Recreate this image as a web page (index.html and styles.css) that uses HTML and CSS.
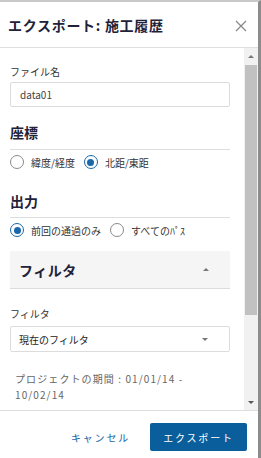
FILE: index.html
```html
<!DOCTYPE html>
<html lang="ja">
<head>
<meta charset="UTF-8" />
<meta name="viewport" content="width=device-width, initial-scale=1" />
<title>エクスポート: 施工履歴</title>
<link rel="stylesheet" href="styles.css">
</head>
<body>
<div class="panel">
  <div class="header">
    <h1 class="title">エクスポート: 施工履歴</h1>
    <svg class="close" width="12" height="12" viewBox="0 0 12 12"><path d="M1 1L11 11M11 1L1 11" stroke="#8a8a8a" stroke-width="1.3" fill="none"/></svg>
  </div>

  <div class="body">
    <div class="content">
      <label class="field-label" for="naam">ファイル名</label>
      <div class="input">data01</div>

      <h2 class="section-title first">座標</h2>
      <div class="radio-row">
        <label class="radio"><span class="dot"></span>緯度/経度</label>
        <label class="radio"><span class="dot checked"></span>北距/東距</label>
      </div>

      <h2 class="section-title">出力</h2>
      <div class="radio-row">
        <label class="radio"><span class="dot checked"></span>前回の通過のみ</label>
        <label class="radio"><span class="dot"></span>すべてのﾊﾟｽ</label>
      </div>

      <div class="filter-head">
        <span>フィルタ</span>
        <span class="caret up"></span>
      </div>

      <div class="field-label filter-label">フィルタ</div>
      <div class="select">
        <span>現在のフィルタ</span>
        <span class="caret down"></span>
      </div>

      <p class="period">プロジェクトの期間 : 01/01/14 -<br>10/02/14</p>
    </div>

    <div class="scrollbar">
      <div class="sb-btn"><span class="caret up"></span></div>
      <div class="sb-thumb"></div>
      <div class="sb-track"></div>
      <div class="sb-btn"><span class="caret down dark"></span></div>
    </div>
  </div>

  <div class="footer">
    <button class="btn-link">キャンセル</button>
    <button class="btn-primary">エクスポート</button>
  </div>
</div>
</body>
</html>
```

FILE: styles.css
```css
body { margin: 0; background: #fff; font-family: "Noto Sans CJK JP", "Noto Sans", sans-serif; }
.panel {
  width: 258px; height: 456px; background: #fff;
  border-top: 2px solid #c9c9c9; border-right: 3px solid #8c8c8c;
  display: flex; flex-direction: column;
}
.header {
  height: 45px; border-bottom: 1px solid #dedede;
  display: flex; align-items: center; justify-content: space-between;
  padding: 0 11px 0 8px;
}
.title { margin: 0; font-size: 14px; font-weight: bold; color: #1f2238; letter-spacing: 0.7px; line-height: 20px; }
.close { margin-top: 2px; }

.body { height: 362px; display: flex; }
.content { width: 220px; padding: 0 14px 0 10px; overflow: hidden; }

.field-label { display: block; margin-top: 17px; font-size: 10px; line-height: 14px; color: #333; }
.input, .select {
  margin-top: 3px; height: 23px; border: 1px solid #dcdcdc; border-radius: 2px;
  font-size: 10px; color: #333; display: flex; align-items: center;
}
.input { padding-left: 9px; color: #444; }

.section-title {
  margin: 15px 0 0; font-size: 14px; font-weight: bold; color: #1f2238;
  line-height: 20px; padding-bottom: 7px; border-bottom: 1px solid #dedede;
}
.section-title:not(.first) { margin-top: 21px; padding-bottom: 6px; }

.radio-row { margin-top: 4px; height: 16px; display: flex; gap: 9px; }
.radio { display: flex; align-items: center; gap: 7px; font-size: 10px; color: #333; }
.dot {
  width: 12px; height: 12px; border: 1.5px solid #8a8a8a; border-radius: 50%;
  display: flex; align-items: center; justify-content: center;
}
.dot.checked { border-color: #1a68aa; }
.dot.checked::after { content: ""; width: 7px; height: 7px; border-radius: 50%; background: #1a68aa; }

.filter-head {
  margin-top: 13px; height: 37px; background: #f5f5f5; border-bottom: 1px solid #dcdcdc;
  display: flex; align-items: center; justify-content: space-between;
  padding: 0 21px 0 9px; font-size: 14px; font-weight: bold; color: #1f2238; letter-spacing: 0.5px;
}
.caret { width: 0; height: 0; border-left: 3.5px solid transparent; border-right: 3.5px solid transparent; }
.caret.up { border-bottom: 3.5px solid #777; }
.caret.down { border-top: 3.5px solid #777; }
.caret.dark { border-top-color: #555; }

.filter-label { margin-top: 18px; }
.select { margin-top: 5px; height: 24px; padding: 0 21px 0 8px; justify-content: space-between; color: #222; }

.period { margin: 19px 0 0; padding-left: 5px; font-size: 10px; line-height: 16px; color: #666; letter-spacing: 1.1px; }

.scrollbar { width: 14px; background: #f1f1f1; display: flex; flex-direction: column; }
.sb-btn { height: 16px; display: flex; align-items: center; justify-content: center; }
.sb-thumb { margin: 1px 1px 0; height: 250px; background: #c1c1c1; }
.sb-track { flex: 1; }

.footer {
  flex: 1; border-top: 1px solid #dedede;
  display: flex; justify-content: flex-end; align-items: flex-start;
  padding: 12px 11px 0 0; gap: 20px;
}
button { font-family: inherit; font-size: 10px; letter-spacing: 1.8px; border: none; cursor: pointer; }
.btn-link { background: none; color: #1266a6; height: 28px; padding: 0; }
.btn-primary { background: #0b5e9c; color: #fff; width: 97px; height: 28px; border-radius: 2px; }
```
